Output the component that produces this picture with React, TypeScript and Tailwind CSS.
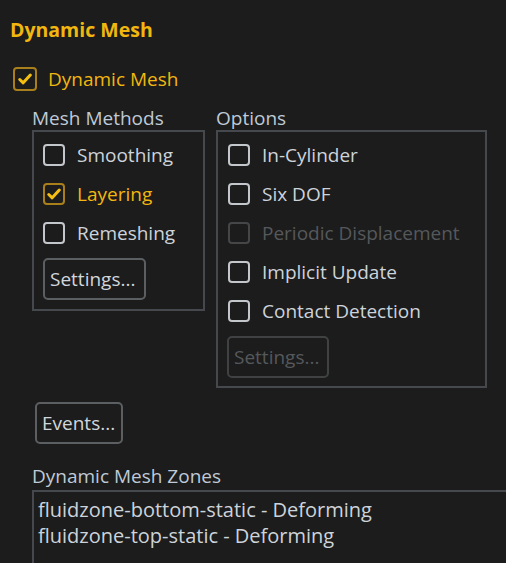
import React from 'react';

type BoxProps = { checked?: boolean; disabled?: boolean; size?: string };

const Box: React.FC<BoxProps> = ({ checked, disabled, size = 'w-[22px] h-[22px]' }) => {
  const border = checked ? 'border-[#a97f1c]' : disabled ? 'border-[#444648]' : 'border-[#c3c6ca]';
  return (
    <span className={`${size} ${border} border-2 rounded-[4px] flex items-center justify-center shrink-0`}>
      {checked && (
        <svg width="14" height="12" viewBox="0 0 14 12" fill="none">
          <polyline points="1.8,6.5 5.2,9.8 12.3,2" stroke="#f5bf12" strokeWidth="3" strokeLinecap="round" strokeLinejoin="round" />
        </svg>
      )}
    </span>
  );
};

type RowProps = { label: string; checked?: boolean; disabled?: boolean };

const CheckRow: React.FC<RowProps> = ({ label, checked, disabled }) => {
  const color = checked ? 'text-[#f2b70f]' : disabled ? 'text-[#55585b]' : 'text-[#cdd3da]';
  return (
    <div className="h-[39px] flex items-center gap-[12px]">
      <Box checked={checked} disabled={disabled} />
      <span className={color}>{label}</span>
    </div>
  );
};

const Button: React.FC<{ label: string; disabled?: boolean; w: string }> = ({ label, disabled, w }) => (
  <div
    className={`${w} h-[42px] border-2 rounded-[5px] flex items-center px-[5px] ${
      disabled ? 'border-[#3f4143] text-[#55585b]' : 'border-[#5c5f62] text-[#d2d6db]'
    }`}
  >
    {label}
  </div>
);

export default function App() {
  return (
    <div
      className="w-[506px] h-[563px] bg-[#1c1c1c] overflow-hidden text-[19px] leading-[24px]"
      style={{ fontFamily: '"Open Sans", "Noto Sans", sans-serif' }}
    >
      <div className="mt-[18px] pl-[10px] font-bold text-[19.5px] text-[#f2b70f]">Dynamic Mesh</div>

      <div className="mt-[25px] pl-[13px] flex items-center gap-[11px] h-[24px]">
        <Box checked size="w-[24px] h-[24px]" />
        <span className="text-[#f2b70f]">Dynamic Mesh</span>
      </div>

      <div className="mt-[15px] pl-[32px] flex gap-[11px]">
        <div className="w-[173px]">
          <div className="h-[24px] text-[#bfcad6]">Mesh Methods</div>
          <div className="h-[181px] border-2 border-[#45494d] pl-[9px] pt-[3px]">
            <CheckRow label="Smoothing" />
            <CheckRow label="Layering" checked />
            <CheckRow label="Remeshing" />
            <div className="mt-[6px]">
              <Button label="Settings..." w="w-[103px]" />
            </div>
          </div>
        </div>

        <div className="w-[271px]">
          <div className="h-[24px] text-[#bfcad6]">Options</div>
          <div className="h-[258px] border-2 border-[#45494d] pl-[10px] pt-[3px]">
            <CheckRow label="In-Cylinder" />
            <CheckRow label="Six DOF" />
            <CheckRow label="Periodic Displacement" disabled />
            <CheckRow label="Implicit Update" />
            <CheckRow label="Contact Detection" />
            <div className="mt-[6px] -ml-[1px]">
              <Button label="Settings..." w="w-[102px]" disabled />
            </div>
          </div>
        </div>
      </div>

      <div className="mt-[14px] pl-[35px]">
        <Button label="Events..." w="w-[88px]" />
      </div>

      <div className="mt-[20px] pl-[32px] h-[24px] text-[#bfcad6]">Dynamic Mesh Zones</div>

      <div className="ml-[32px] mt-[2px] w-[500px] h-[100px] border-2 border-[#45494d] pl-[4px] pt-[5px] text-[20px] text-[#cdd3da] leading-[26px]">
        <div>fluidzone-bottom-static - Deforming</div>
        <div>fluidzone-top-static - Deforming</div>
      </div>
    </div>
  );
}
